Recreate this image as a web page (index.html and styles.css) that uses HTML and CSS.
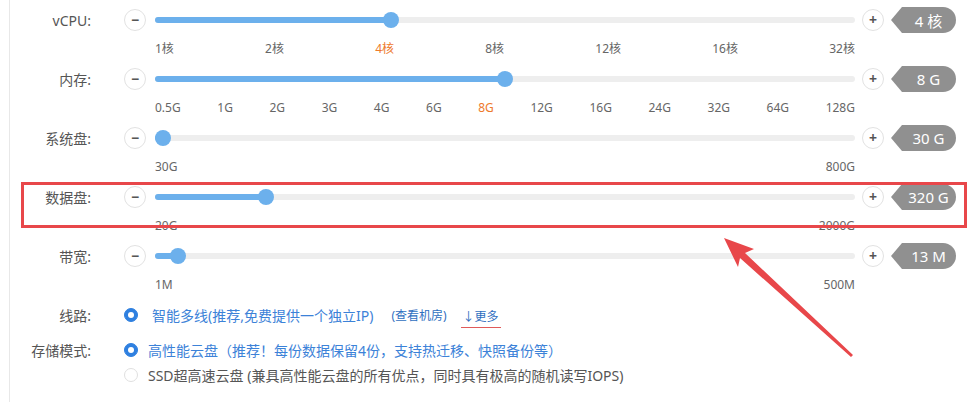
FILE: index.html
```html
<!DOCTYPE html>
<html lang="zh-CN">
<head>
	<meta charset="UTF-8">
	<title>云服务器配置</title>
	<link rel="stylesheet" href="styles.css">
</head>
<body>
	<div class="panel">
		<!-- vCPU -->
		<div class="item">
			<div class="ctrl">
				<span class="label">vCPU:</span>
				<span class="btn">&minus;</span>
				<div class="track">
					<div class="fill" style="width: 236px;"></div>
					<div class="knob" style="left: 228px;"></div>
				</div>
				<span class="btn">+</span>
				<span class="tag">4 核</span>
			</div>
			<div class="ticks">
				<span>1核</span><span>2核</span><span class="on">4核</span><span>8核</span><span>12核</span><span>16核</span><span>32核</span>
			</div>
		</div>
		<!-- 内存 -->
		<div class="item">
			<div class="ctrl">
				<span class="label">内存:</span>
				<span class="btn">&minus;</span>
				<div class="track">
					<div class="fill" style="width: 350px;"></div>
					<div class="knob" style="left: 342px;"></div>
				</div>
				<span class="btn">+</span>
				<span class="tag">8 G</span>
			</div>
			<div class="ticks">
				<span>0.5G</span><span>1G</span><span>2G</span><span>3G</span><span>4G</span><span>6G</span><span class="on">8G</span><span>12G</span><span>16G</span><span>24G</span><span>32G</span><span>64G</span><span>128G</span>
			</div>
		</div>
		<!-- 系统盘 -->
		<div class="item">
			<div class="ctrl">
				<span class="label">系统盘:</span>
				<span class="btn">&minus;</span>
				<div class="track">
					<div class="fill" style="width: 8px;"></div>
					<div class="knob" style="left: 0px;"></div>
				</div>
				<span class="btn">+</span>
				<span class="tag">30 G</span>
			</div>
			<div class="ticks">
				<span>30G</span><span>800G</span>
			</div>
		</div>
		<!-- 数据盘 -->
		<div class="item">
			<div class="ctrl">
				<span class="label">数据盘:</span>
				<span class="btn">&minus;</span>
				<div class="track">
					<div class="fill" style="width: 111px;"></div>
					<div class="knob" style="left: 103px;"></div>
				</div>
				<span class="btn">+</span>
				<span class="tag">320 G</span>
			</div>
			<div class="ticks">
				<span>20G</span><span>2000G</span>
			</div>
		</div>
		<!-- 带宽 -->
		<div class="item">
			<div class="ctrl">
				<span class="label">带宽:</span>
				<span class="btn">&minus;</span>
				<div class="track">
					<div class="fill" style="width: 23px;"></div>
					<div class="knob" style="left: 15px;"></div>
				</div>
				<span class="btn">+</span>
				<span class="tag">13 M</span>
			</div>
			<div class="ticks">
				<span>1M</span><span>500M</span>
			</div>
		</div>
		<!-- 线路 -->
		<div class="opt line">
			<span class="label">线路:</span>
			<span class="radio checked"></span>
			<span class="txt blue pad">智能多线(推荐,免费提供一个独立IP)</span>
			<a class="room">(查看机房)</a>
			<a class="more">↓更多</a>
		</div>
		<!-- 存储模式 -->
		<div class="opt store">
			<span class="label">存储模式:</span>
			<span class="radio checked"></span>
			<span class="txt blue">高性能云盘（推荐！每份数据保留4份，支持热迁移、快照备份等）</span>
		</div>
		<div class="opt ssd">
			<span class="label"></span>
			<span class="radio"></span>
			<span class="txt">SSD超高速云盘 (兼具高性能云盘的所有优点，同时具有极高的随机读写IOPS)</span>
		</div>
	</div>

	<!-- 标注 -->
	<div class="mark"></div>
	<svg class="arrow" width="976" height="402" viewBox="0 0 976 402">
		<polygon points="724,238 754,249 745,253 853,355 851,357 740,258 738,267" fill="#e8474a"/>
	</svg>
</body>
</html>
```

FILE: styles.css
```css
*{margin: 0;padding: 0;box-sizing: border-box;}
body{width: 976px;height: 402px;overflow: hidden;background: #fff;font-family: "Noto Sans","Noto Sans CJK SC",sans-serif;color: #555;position: relative;}
.panel{margin-left: 9px;border-left: 1px solid #e8e8e8;height: 402px;padding-top: 9px;}
.item{height: 59px;}
.ctrl{display: flex;align-items: center;height: 22px;}
.label{width: 81px;text-align: right;font-size: 14px;color: #555;flex-shrink: 0;}
.btn{width: 22px;height: 22px;border: 1px solid #e2e2e2;border-radius: 50%;margin-left: 33px;display: flex;align-items: center;justify-content: center;font-size: 14px;font-weight: bold;color: #555;line-height: 1;flex-shrink: 0;}
.btn + .tag{margin-left: 7px;}
.track{width: 700px;height: 6px;border-radius: 3px;background: #eeeeee;margin-left: 9px;position: relative;}
.track + .btn{margin-left: 7px;}
.fill{height: 6px;border-radius: 3px;background: #6cb0ec;}
.knob{position: absolute;top: -5px;width: 16px;height: 16px;border-radius: 50%;background: #6cb0ec;}
.tag{width: 65px;height: 26px;background: #909090;color: #fff;font-size: 15px;display: flex;align-items: center;justify-content: center;padding-left: 10px;border-radius: 0 13px 13px 0;clip-path: polygon(0 50%,11px 0,100% 0,100% 100%,11px 100%);}
.ticks{display: flex;justify-content: space-between;width: 700px;margin: 10px 0 0 145px;font-size: 12px;color: #666;line-height: 16px;}
.ticks .on{color: #ee7a2c;}
.opt{display: flex;align-items: center;height: 22px;font-size: 14px;}
.store{margin-top: 13px;}
.ssd{margin-top: 3px;}
.radio{width: 14px;height: 14px;border-radius: 50%;border: 1px solid #e0e0e0;margin-left: 33px;flex-shrink: 0;position: relative;}
.radio.checked{background: #2f80e0;border-color: #2f80e0;}
.radio.checked:after{content: '';position: absolute;left: 3px;top: 3px;width: 6px;height: 6px;border-radius: 50%;background: #fff;}
.txt{margin-left: 10px;color: #555;white-space: nowrap;}
.txt.pad{margin-left: 14px;}
.blue{color: #3c82d8;}
.room{margin-left: 18px;font-size: 12px;color: #2f6fbf;}
.more{margin-left: 14px;font-size: 12px;color: #2f6fbf;border-bottom: 1px solid #e05a5a;padding: 0 2px 2px 2px;margin-top: 4px;}
.mark{position: absolute;left: 21px;top: 182px;width: 946px;height: 46px;border: 3px solid #e8474a;}
.arrow{position: absolute;left: 0;top: 0;}
```
